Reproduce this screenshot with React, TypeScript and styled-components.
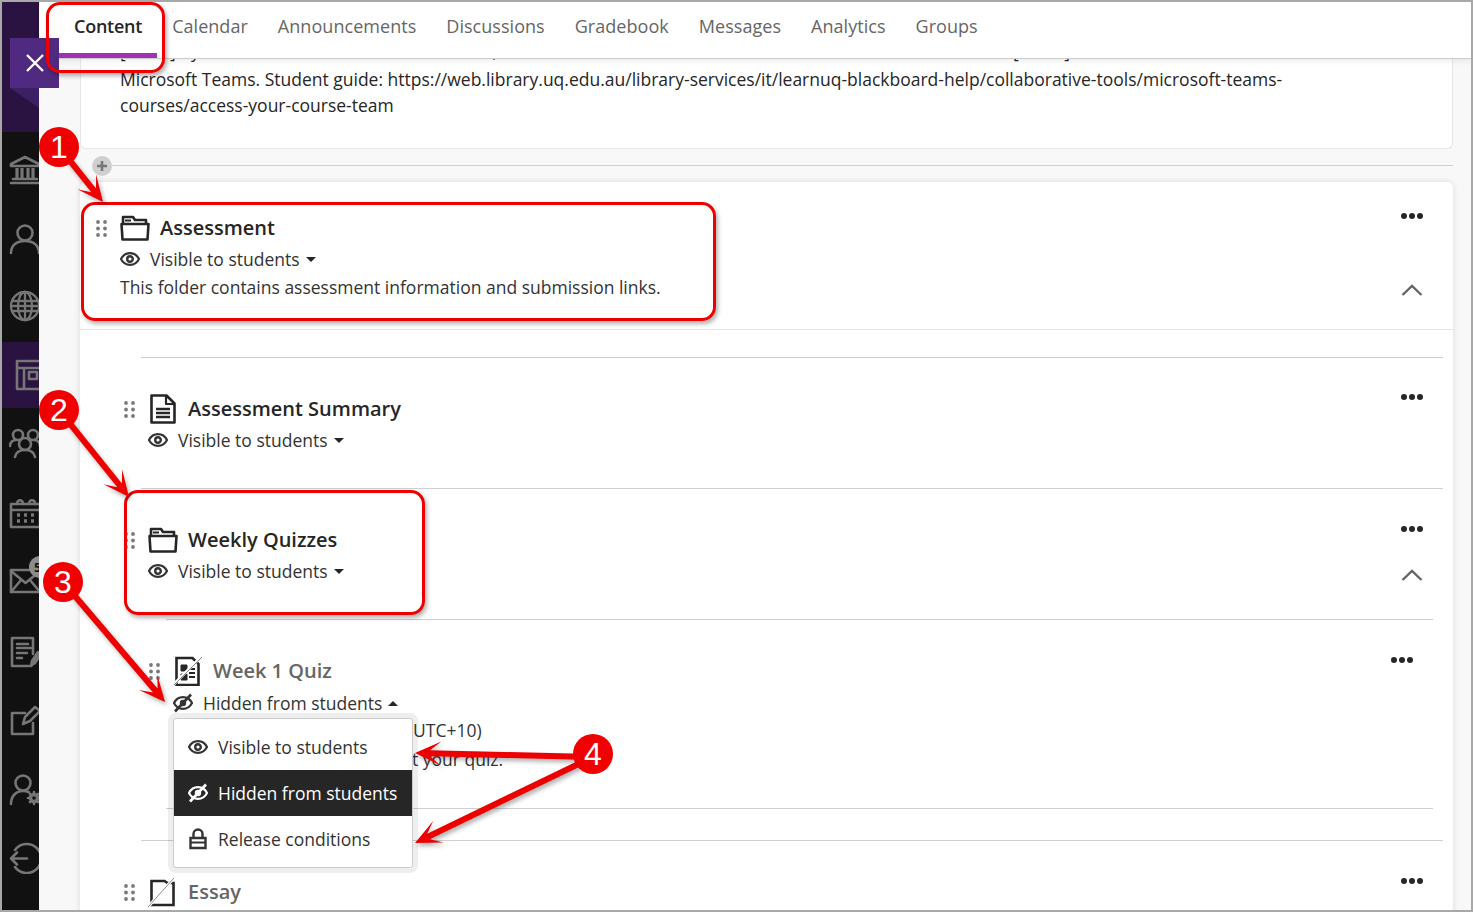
import React from "react";
import styled, { createGlobalStyle } from "styled-components";

const GlobalStyle = createGlobalStyle`
  html, body {
    margin: 0;
    background: #fff;
    overflow: hidden;
  }
  * {
    box-sizing: border-box;
  }
`;

const Frame = styled.div`
  position: relative;
  display: flex;
  width: 1473px;
  height: 912px;
  border: 2px solid #a8a8a8;
  background: #f8f8f8;
  font-family: "Open Sans", "Liberation Sans", sans-serif;
  color: #262626;
  overflow: hidden;
`;

/* left nav */
const Sidebar = styled.nav`
  position: relative;
  flex: 0 0 37px;
  display: flex;
  flex-direction: column;
  background: #111;
  overflow: hidden;
`;
const SideTop = styled.div`
  flex: 0 0 130px;
  margin-bottom: 4px;
  background: #2a1241;
`;
const SideItem = styled.div<{ $h: number; $up?: number; $active?: boolean }>`
  position: relative;
  flex: 0 0 ${(p) => p.$h}px;
  display: flex;
  align-items: center;
  padding-left: 7px;
  padding-bottom: ${(p) => p.$up || 0}px;
  background: ${(p) => (p.$active ? "#2a1241" : "transparent")};
  color: #767676;
  svg {
    flex: 0 0 32px;
  }
`;
const MailBadge = styled.span`
  position: absolute;
  left: 27px;
  top: 8px;
  width: 22px;
  height: 22px;
  border-radius: 50%;
  background: #8c8c8c;
  color: #111;
  font-size: 13px;
  font-weight: 700;
  line-height: 22px;
  padding-left: 5px;
`;

const CloseButton = styled.div`
  position: absolute;
  left: 8px;
  top: 36px;
  width: 49px;
  height: 50px;
  display: flex;
  align-items: center;
  justify-content: center;
  background: #4f2a80;
  color: #fff;
  z-index: 6;
  &::after {
    content: "";
    position: absolute;
    left: 0;
    top: 100%;
    border-top: 20px solid #3d1f63;
    border-left: 29px solid transparent;
  }
`;

/* main column */
const Main = styled.main`
  flex: 1;
  min-width: 0;
  display: flex;
  flex-direction: column;
`;
const TabBar = styled.div`
  position: relative;
  z-index: 3;
  flex: 0 0 57px;
  display: flex;
  padding-left: 20px;
  background: #fff;
  border-bottom: 1px solid #ccc;
  box-shadow: 0 2px 6px rgba(0, 0, 0, 0.08);
`;
const Tab = styled.div<{ $active?: boolean }>`
  height: 56px;
  padding: 10px 15px 0;
  font-size: 18px;
  line-height: 28px;
  white-space: nowrap;
  letter-spacing: ${(p) => (p.$active ? "-0.25px" : "0.04px")};
  font-weight: ${(p) => (p.$active ? 600 : 500)};
  color: ${(p) => (p.$active ? "#262626" : "#666")};
  border-bottom: 5px solid ${(p) => (p.$active ? "#a033b3" : "transparent")};
`;
const Scroll = styled.div`
  flex: 1;
  overflow: hidden;
  padding: 0 18px 0 41px;
`;
const TextCard = styled.section`
  margin-top: -21px;
  padding: 0 160px 31px 39px;
  background: #fff;
  border: 1px solid #e6e6e6;
  border-top: 0;
  border-radius: 0 0 6px 6px;
  font-size: 17.5px;
  line-height: 26px;
  height: 111px;
`;
const ClippedLine = styled.div`
  margin-bottom: 2px;
  white-space: nowrap;
`;
const AddRow = styled.div`
  height: 33px;
  display: flex;
  align-items: center;
  margin-left: 12px;
`;
const AddButton = styled.span`
  flex: 0 0 20px;
  height: 20px;
  border-radius: 50%;
  background: #cfcfcf;
  color: #777;
  display: flex;
  align-items: center;
  justify-content: center;
`;
const AddLine = styled.span`
  flex: 1;
  height: 1px;
  background: #cfcfcf;
`;
const FolderCard = styled.section`
  background: #fff;
  border-radius: 6px 6px 0 0;
  box-shadow: 0 0 6px rgba(0, 0, 0, 0.12);
  height: 800px;
`;
const Item = styled.div<{ $h: number; $pt: number; $pl: number; $pr?: number; $line?: boolean }>`
  display: flex;
  height: ${(p) => p.$h}px;
  padding: ${(p) => p.$pt}px ${(p) => p.$pr ?? 21}px 0 ${(p) => p.$pl}px;
  border-bottom: ${(p) => (p.$line ? "1px solid #e6e6e6" : "0")};
`;
const Divider = styled.hr<{ $ml: number; $mr: number; $before?: number; $after?: number }>`
  height: 1px;
  border: 0;
  background: #cfcfcf;
  margin: ${(p) => p.$before || 0}px ${(p) => p.$mr}px ${(p) => p.$after || 0}px ${(p) => p.$ml}px;
`;
const Grip = styled.span`
  flex: 0 0 24px;
  height: 28px;
  display: flex;
  align-items: center;
  color: #7a7a7a;
`;
const Body = styled.div`
  flex: 1;
  min-width: 0;
`;
const TitleRow = styled.div`
  display: flex;
  align-items: center;
  gap: 10px;
  height: 28px;
`;
const Title = styled.h3<{ $hidden?: boolean }>`
  margin: 0;
  font-size: 20px;
  line-height: 28px;
  font-weight: 600;
  white-space: nowrap;
  color: ${(p) => (p.$hidden ? "#666" : "#262626")};
`;
const StatusRow = styled.div<{ $gap?: number }>`
  position: relative;
  display: flex;
  align-items: center;
  height: 26px;
  margin-top: ${(p) => p.$gap ?? 4}px;
  font-size: 17.5px;
  gap: 10px;
  color: #333;
  white-space: nowrap;
`;
const Caret = styled.span<{ $up?: boolean }>`
  width: 0;
  height: 0;
  margin-left: -4px;
  border-left: 5px solid transparent;
  border-right: 5px solid transparent;
  ${(p) => (p.$up ? "border-bottom: 5px solid #262626;" : "border-top: 5px solid #262626;")}
`;
const Desc = styled.p<{ $gap?: number; $ml?: number }>`
  margin: ${(p) => p.$gap ?? 2}px 0 0 ${(p) => p.$ml || 0}px;
  font-size: 17.5px;
  line-height: 26px;
  white-space: nowrap;
  color: #333;
`;
const Side = styled.div<{ $lift?: number }>`
  flex: 0 0 40px;
  display: flex;
  flex-direction: column;
  align-items: center;
  margin-top: ${(p) => -(p.$lift || 0)}px;
  color: #262626;
`;
const MoreDots = styled.span`
  display: flex;
  gap: 2px;
  height: 6px;
  i {
    width: 6px;
    height: 6px;
    border-radius: 50%;
    background: #262626;
  }
`;
const Chevron = styled.svg<{ $top: number }>`
  display: block;
  margin-top: ${(p) => p.$top}px;
  color: #666;
`;

/* visibility menu */
const Menu = styled.div`
  position: absolute;
  z-index: 2;
  left: 0;
  top: 28px;
  width: 240px;
  height: 150px;
  padding: 5px 0;
  background: #fff;
  border: 1px solid #ccc;
  border-radius: 3px;
  box-shadow: 0 0 0 5px rgba(0, 0, 0, 0.065);
`;
const MenuItem = styled.div<{ $active?: boolean }>`
  display: flex;
  align-items: center;
  gap: 10px;
  height: 46px;
  padding-left: 14px;
  font-size: 17.5px;
  font-weight: ${(p) => (p.$active ? 500 : 400)};
  background: ${(p) => (p.$active ? "#262626" : "transparent")};
  color: ${(p) => (p.$active ? "#fff" : "#333")};
`;

/* red callouts laid over the screenshot */
const Annotations = styled.div`
  position: absolute;
  left: -2px;
  top: -2px;
  width: 1473px;
  height: 912px;
  z-index: 10;
  pointer-events: none;
`;
const CalloutBox = styled.div<{ $x: number; $y: number; $w: number; $h: number }>`
  position: absolute;
  left: ${(p) => p.$x}px;
  top: ${(p) => p.$y}px;
  width: ${(p) => p.$w}px;
  height: ${(p) => p.$h}px;
  border: 3px solid #ee0000;
  border-radius: 14px;
  box-shadow: 2px 3px 4px rgba(0, 0, 0, 0.3);
`;
const Number = styled.span<{ $x: number; $y: number }>`
  position: absolute;
  left: ${(p) => p.$x - 20}px;
  top: ${(p) => p.$y - 20}px;
  width: 40px;
  height: 40px;
  border-radius: 50%;
  background: #f00000;
  color: #fff;
  font-family: "Liberation Sans", sans-serif;
  font-size: 32px;
  line-height: 41px;
  text-align: center;
`;
const ArrowLayer = styled.svg`
  position: absolute;
  left: 0;
  top: 0;
  filter: drop-shadow(2px 3px 2px rgba(0, 0, 0, 0.3));
`;

const arrowPoints = (x0: number, y0: number, x1: number, y1: number) => {
  const len = Math.hypot(x1 - x0, y1 - y0);
  const ux = (x1 - x0) / len;
  const uy = (y1 - y0) / len;
  const at = (back: number, side: number) =>
    `${(x1 - ux * back - uy * side).toFixed(1)},${(y1 - uy * back + ux * side).toFixed(1)}`;
  const start = (side: number) =>
    `${(x0 - uy * side).toFixed(1)},${(y0 + ux * side).toFixed(1)}`;
  return [start(-3), at(15, -3), at(26, -12), at(0, 0), at(26, 12), at(15, 3), start(3)].join(" ");
};

const Stroke = ({ size = 32, w = 2.6, children }: { size?: number; w?: number; children: React.ReactNode }) => (
  <svg width={size} height={size} viewBox="0 0 32 32" fill="none" stroke="currentColor" strokeWidth={w} strokeLinecap="round" strokeLinejoin="round">
    {children}
  </svg>
);

const BankIcon = () => (
  <Stroke>
    <path d="M2 10 16 3l14 7v2H2z" />
    <path d="M8 14v10M13 14v10M19 14v10M24 14v10" strokeWidth={3.2} strokeLinecap="butt" />
    <path d="M4 25h24M2 29h28" />
  </Stroke>
);
const PersonIcon = () => (
  <Stroke>
    <circle cx="16" cy="10" r="7.5" />
    <path d="M2 30c0-8 6-12 14-12s14 4 14 12" />
  </Stroke>
);
const GlobeIcon = () => (
  <Stroke w={2.3}>
    <circle cx="16" cy="16" r="14" />
    <ellipse cx="16" cy="16" rx="7" ry="14" />
    <path d="M16 2v28M3 11h26M3 21h26M2 16h28" />
  </Stroke>
);
const CourseIcon = () => (
  <Stroke>
    <path d="M8 2h28v28H8zM8 9h28M15 9v21" strokeLinecap="butt" />
    <path d="M20 13h8v7h-8z" />
  </Stroke>
);
const GroupIcon = () => (
  <Stroke>
    <circle cx="9" cy="8" r="5" />
    <circle cx="24" cy="8" r="5" />
    <circle cx="16" cy="17" r="6" />
    <path d="M1 19c0-4 3-6 6-6M31 19c0-4-3-6-6-6M6 30c1-5 5-7 10-7s9 2 10 7" />
  </Stroke>
);
const CalendarIcon = () => (
  <Stroke>
    <path d="M2 7h29v23H2zM2 13h29" />
    <path d="M8 7c0-5 6-5 6 0M20 7c0-5 6-5 6 0" />
    <path d="M8 18h3M15 18h3M22 18h3M8 24h3M15 24h3M22 24h3" strokeWidth={3.4} strokeLinecap="butt" />
  </Stroke>
);
const MailIcon = () => (
  <Stroke>
    <path d="M2 6h29v22H2z" />
    <path d="M2 7l14.5 12L31 7M2 28l10-12M31 28 21 16" />
  </Stroke>
);
const GradesIcon = () => (
  <Stroke>
    <path d="M24 18V2H3v28h17" />
    <path d="M8 8h11M8 12h14M8 17h10M8 22h5" />
    <path d="M24 28l-2 2 1-5 6-9 3 2-6 9z" fill="currentColor" />
  </Stroke>
);
const EditIcon = () => (
  <Stroke>
    <path d="M24 18v11H3V8h13" />
    <path d="M14 19l2-7L26 2l5 4-10 10z" />
  </Stroke>
);
const UserGearIcon = () => (
  <Stroke>
    <circle cx="14" cy="9" r="7.5" />
    <path d="M2 30c0-8 5-13 12-13 2 0 4 .4 6 1.3" />
    <circle cx="25" cy="24" r="3.5" strokeWidth={3.4} />
    <path d="M25 18v2M25 28v2M19 24h2M29 24h2M21 20l1.4 1.4M27.6 26.6 29 28M21 28l1.4-1.4M27.6 21.4 29 20" strokeWidth={2.6} />
  </Stroke>
);
const LogoutIcon = () => (
  <Stroke>
    <path d="M6 8a14.5 14.5 0 1 1 0 17" />
    <path d="M2 16.5h16M8 10.5l-6 6 6 6" />
  </Stroke>
);

const XIcon = () => (
  <svg width="18" height="18" viewBox="0 0 18 18" stroke="currentColor" strokeWidth="2.4">
    <path d="M1 1l16 16M17 1 1 17" />
  </svg>
);
const PlusIcon = () => (
  <svg width="12" height="12" viewBox="0 0 12 12" stroke="currentColor" strokeWidth="2.6">
    <path d="M6 1v10M1 6h10" />
  </svg>
);
const GripIcon = () => (
  <svg width="11" height="17" viewBox="0 0 11 17" fill="currentColor">
    {[2, 8.5, 15].map((y) => (
      <React.Fragment key={y}>
        <circle cx="2" cy={y} r="1.9" />
        <circle cx="9" cy={y} r="1.9" />
      </React.Fragment>
    ))}
  </svg>
);
const FolderIcon = () => (
  <svg width="30" height="26" viewBox="0 0 30 26" fill="none" stroke="#262626" strokeWidth="2.6" strokeLinejoin="round">
    <path d="M3 9V2h10l2 3h11v4" />
    <path d="M1.500 9h27l-1 15.500h-25z" />
    <path d="M5 5.500h6" strokeWidth="2" />
  </svg>
);
const DocIcon = () => (
  <svg width="30" height="30" viewBox="0 0 30 30" fill="none" stroke="#262626" strokeWidth="2.6" strokeLinejoin="round">
    <path d="M3.500 1.500h15l8 8v19h-23z" />
    <path d="M18 1.500v8.500h8.500" strokeWidth="2.200" />
    <path d="M8 15h14M8 19h14M8 23h14" strokeWidth="2.400" />
  </svg>
);
const QuizIcon = () => (
  <svg width="30" height="30" viewBox="0 0 30 30" fill="none" stroke="#262626" strokeWidth="2.600">
    <path d="M3.500 2h16l6 6v21h-22z" />
    <path d="M8 9h6v6H8zM8 18h6v6H8z" fill="#262626" strokeWidth="1" />
    <path d="M16 13h6M16 17h6M16 21h6" strokeWidth="2.200" />
    <path d="M0 29 29 0" stroke="#fff" strokeWidth="3" />
    <path d="M1 29 29 1" stroke="#8a8a8a" strokeWidth="1" />
  </svg>
);
const EssayIcon = () => (
  <svg width="30" height="30" viewBox="0 0 30 30" fill="none" stroke="#262626" strokeWidth="2.600">
    <path d="M3.500 4h13l3 2h6v22h-22z" />
    <path d="M0 30 26 1" stroke="#fff" strokeWidth="3" />
    <path d="M0 30 26 1" stroke="#8a8a8a" strokeWidth="1" />
  </svg>
);
const EyeIcon = () => (
  <svg width="20" height="20" viewBox="0 0 20 20" fill="none" stroke="currentColor" strokeWidth="2.200">
    <path d="M1 10c4-7.800 14-7.800 18 0-4 7.800-14 7.800-18 0z" />
    <circle cx="10" cy="10" r="2.800" strokeWidth="2.400" />
  </svg>
);
const EyeOffIcon = () => (
  <svg width="20" height="20" viewBox="0 0 20 20" fill="none" stroke="currentColor" strokeWidth="2.200">
    <path d="M1 10c4-7.800 14-7.800 18 0-4 7.800-14 7.800-18 0z" />
    <circle cx="10" cy="10" r="2.200" strokeWidth="2" />
    <path d="M2 18.500 18 1.500" strokeWidth="2.600" />
  </svg>
);
const LockIcon = () => (
  <svg width="20" height="22" viewBox="0 0 20 22" fill="none" stroke="currentColor" strokeWidth="2.400">
    <path d="M2.500 10h15v10h-15zM5.500 10V6a4.500 4.500 0 0 1 9 0v4" />
    <path d="M2.500 14.500h15" strokeWidth="2" />
  </svg>
);

const More = () => (
  <MoreDots>
    <i />
    <i />
    <i />
  </MoreDots>
);
const ChevronUp = ({ top }: { top: number }) => (
  <Chevron $top={top} width="22" height="12" viewBox="0 0 22 12" fill="none" stroke="currentColor" strokeWidth="2.400">
    <path d="M1.500 11 11 2l9.500 9" />
  </Chevron>
);

const tabs = ["Content", "Calendar", "Announcements", "Discussions", "Gradebook", "Messages", "Analytics", "Groups"];

const arrows = [
  [59, 147, 103, 202],
  [59, 410, 129, 497],
  [63, 582, 165, 702],
  [593, 757, 415, 753],
  [593, 757, 415, 843],
];

export default function App() {
  return (
    <>
      <GlobalStyle />
      <Frame>
        <Sidebar>
          <SideTop />
          <SideItem $h={68}>
            <BankIcon />
          </SideItem>
          <SideItem $h={70}>
            <PersonIcon />
          </SideItem>
          <SideItem $h={68} $up={4}>
            <GlobeIcon />
          </SideItem>
          <SideItem $h={66} $active>
            <CourseIcon />
          </SideItem>
          <SideItem $h={70}>
            <GroupIcon />
          </SideItem>
          <SideItem $h={70}>
            <CalendarIcon />
          </SideItem>
          <SideItem $h={64}>
            <MailIcon />
            <MailBadge>5</MailBadge>
          </SideItem>
          <SideItem $h={80}>
            <GradesIcon />
          </SideItem>
          <SideItem $h={58}>
            <EditIcon />
          </SideItem>
          <SideItem $h={80}>
            <UserGearIcon />
          </SideItem>
          <SideItem $h={56}>
            <LogoutIcon />
          </SideItem>
        </Sidebar>
        <CloseButton>
          <XIcon />
        </CloseButton>

        <Main>
          <TabBar>
            {tabs.map((t, i) => (
              <Tab key={t} $active={i === 0}>
                {t}
              </Tab>
            ))}
          </TabBar>
          <Scroll>
            <TextCard>
              <ClippedLine>
                [Tutor] by the enrolled students in this course, then the tutors and the lecturers will be added to the site near [Team]
              </ClippedLine>
              Microsoft Teams. Student guide: https://web.library.uq.edu.au/library-services/it/learnuq-blackboard-help/collaborative-tools/microsoft-teams-courses/access-your-course-team
            </TextCard>
            <AddRow>
              <AddButton>
                <PlusIcon />
              </AddButton>
              <AddLine />
            </AddRow>
            <FolderCard>
              <Item $h={148} $pt={32} $pl={16} $line>
                <Grip>
                  <GripIcon />
                </Grip>
                <Body>
                  <TitleRow>
                    <FolderIcon />
                    <Title>Assessment</Title>
                  </TitleRow>
                  <StatusRow>
                    <EyeIcon />
                    Visible to students
                    <Caret />
                  </StatusRow>
                  <Desc>This folder contains assessment information and submission links.</Desc>
                </Body>
                <Side $lift={1}>
                  <More />
                  <ChevronUp top={65} />
                </Side>
              </Item>
              <Divider $ml={61} $mr={10} $before={27} />
              <Item $h={130} $pt={37} $pl={44}>
                <Grip>
                  <GripIcon />
                </Grip>
                <Body>
                  <TitleRow>
                    <DocIcon />
                    <Title>Assessment Summary</Title>
                  </TitleRow>
                  <StatusRow>
                    <EyeIcon />
                    Visible to students
                    <Caret />
                  </StatusRow>
                </Body>
                <Side $lift={1}>
                  <More />
                </Side>
              </Item>
              <Divider $ml={61} $mr={10} />
              <Item $h={130} $pt={37} $pl={44}>
                <Grip>
                  <GripIcon />
                </Grip>
                <Body>
                  <TitleRow>
                    <FolderIcon />
                    <Title>Weekly Quizzes</Title>
                  </TitleRow>
                  <StatusRow>
                    <EyeIcon />
                    Visible to students
                    <Caret />
                  </StatusRow>
                </Body>
                <Side>
                  <More />
                  <ChevronUp top={37} />
                </Side>
              </Item>
              <Divider $ml={86} $mr={20} />
              <Item $h={188} $pt={37} $pl={69} $pr={31}>
                <Grip>
                  <GripIcon />
                </Grip>
                <Body>
                  <TitleRow>
                    <QuizIcon />
                    <Title $hidden>Week 1 Quiz</Title>
                  </TitleRow>
                  <StatusRow $gap={5}>
                    <EyeOffIcon />
                    Hidden from students
                    <Caret $up />
                    <Menu>
                      <MenuItem>
                        <EyeIcon />
                        Visible to students
                      </MenuItem>
                      <MenuItem $active>
                        <EyeOffIcon />
                        Hidden from students
                      </MenuItem>
                      <MenuItem>
                        <LockIcon />
                        Release conditions
                      </MenuItem>
                    </Menu>
                  </StatusRow>
                  <Desc $gap={1} $ml={240}>UTC+10)</Desc>
                  <Desc $gap={3} $ml={239}>t your quiz.</Desc>
                </Body>
                <Side>
                  <More />
                </Side>
              </Item>
              <Divider $ml={86} $mr={20} $after={31} />
              <Divider $ml={61} $mr={10} />
              <Item $h={120} $pt={37} $pl={44}>
                <Grip>
                  <GripIcon />
                </Grip>
                <Body>
                  <TitleRow>
                    <EssayIcon />
                    <Title $hidden>Essay</Title>
                  </TitleRow>
                </Body>
                <Side>
                  <More />
                </Side>
              </Item>
            </FolderCard>
          </Scroll>
        </Main>

        <Annotations>
          <CalloutBox $x={46} $y={2} $w={119} $h={71} />
          <CalloutBox $x={81} $y={202} $w={635} $h={119} />
          <CalloutBox $x={124} $y={490} $w={301} $h={125} />
          <ArrowLayer width="1473" height="912" viewBox="0 0 1473 912" fill="#ee0000">
            {arrows.map(([a, b, c, d]) => (
              <polygon key={`${c}-${d}`} points={arrowPoints(a, b, c, d)} />
            ))}
          </ArrowLayer>
          <Number $x={59} $y={147}>1</Number>
          <Number $x={59} $y={410}>2</Number>
          <Number $x={63} $y={582}>3</Number>
          <Number $x={593} $y={754}>4</Number>
        </Annotations>
      </Frame>
    </>
  );
}
